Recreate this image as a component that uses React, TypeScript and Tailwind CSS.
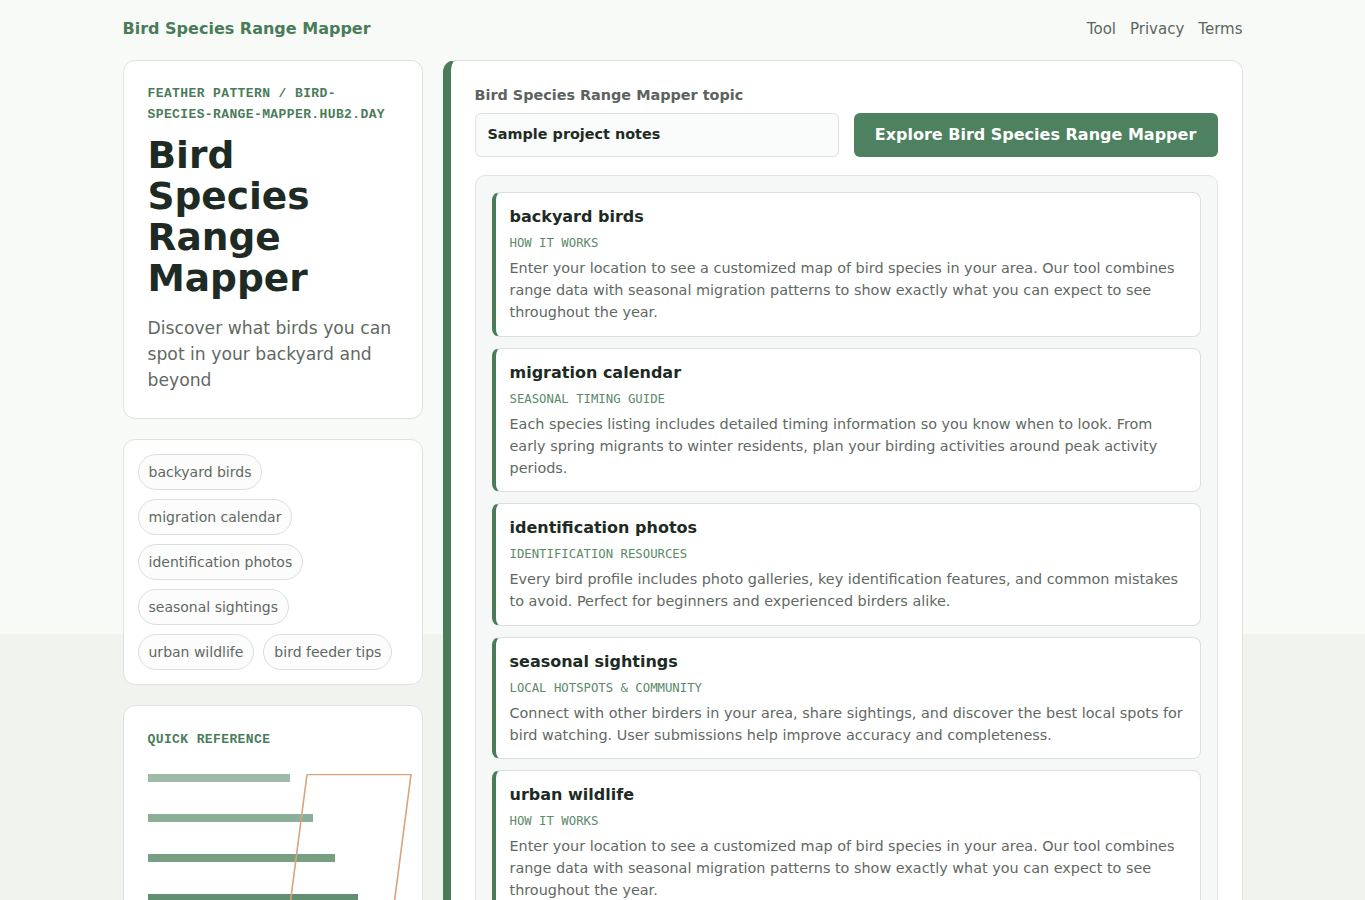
import React from "react"

const topics = [
  "backyard birds",
  "migration calendar",
  "identification photos",
  "seasonal sightings",
  "urban wildlife",
  "bird feeder tips",
]

const entries = [
  {
    title: "backyard birds",
    tag: "How it works",
    body: "Enter your location to see a customized map of bird species in your area. Our tool combines range data with seasonal migration patterns to show exactly what you can expect to see throughout the year.",
  },
  {
    title: "migration calendar",
    tag: "Seasonal timing guide",
    body: "Each species listing includes detailed timing information so you know when to look. From early spring migrants to winter residents, plan your birding activities around peak activity periods.",
  },
  {
    title: "identification photos",
    tag: "Identification resources",
    body: "Every bird profile includes photo galleries, key identification features, and common mistakes to avoid. Perfect for beginners and experienced birders alike.",
  },
  {
    title: "seasonal sightings",
    tag: "Local hotspots & community",
    body: "Connect with other birders in your area, share sightings, and discover the best local spots for bird watching. User submissions help improve accuracy and completeness.",
  },
  {
    title: "urban wildlife",
    tag: "How it works",
    body: "Enter your location to see a customized map of bird species in your area. Our tool combines range data with seasonal migration patterns to show exactly what you can expect to see throughout the year.",
  },
]

const sans = "font-['DejaVu_Sans','Verdana',sans-serif]"
const mono = "font-['Liberation_Mono','Courier_New',monospace]"
const tagMono = "font-['DejaVu_Sans_Mono','Liberation_Mono',monospace]"

function QuickReferenceArt() {
  const bars = [
    { w: 142, o: 0.55 },
    { w: 165, o: 0.65 },
    { w: 187, o: 0.78 },
    { w: 210, o: 0.9 },
    { w: 232, o: 1 },
  ]
  return (
    <svg width="264" height="200" viewBox="0 0 264 200" className="block">
      {bars.map((b, i) => (
        <rect key={i} x="0" y={i * 40} width={b.w} height="8" fill="#4f8462" opacity={b.o} />
      ))}
      <path d="M159 0.5 H263 L237 200 M159 0.5 L133 200" fill="none" stroke="#d9a37c" strokeWidth="1.6" />
    </svg>
  )
}

export default function App() {
  return (
    <div className={`min-h-screen bg-[linear-gradient(to_bottom,#f8faf8_634px,#f1f3ef_634px)] ${sans}`}>
      <div className="mx-auto w-[1120px]">
        <header className="flex items-center justify-between pt-[18px] pb-[20px] leading-[22px]">
          <a className="text-[16px] font-bold text-[#4a7c59]">Bird Species Range Mapper</a>
          <nav className="flex gap-[14px] text-[15px] text-[#5c6660]">
            <a>Tool</a>
            <a>Privacy</a>
            <a>Terms</a>
          </nav>
        </header>

        <div className="flex items-start gap-5">
          <aside className="flex w-[300px] shrink-0 flex-col gap-5">
            <section className="rounded-[12px] border border-[#dfe2df] bg-white px-6 pt-[22px] pb-[25px]">
              <p className={`${mono} text-[13px] font-bold uppercase leading-[21px] tracking-[0.03em] text-[#4a7c59]`}>
                Feather pattern / bird-species-range-mapper.hub2.day
              </p>
              <h1 className="mt-[10px] text-[37.5px] font-bold leading-[41px] text-[#1d2b24]">
                Bird Species Range Mapper
              </h1>
              <p className="mt-4 text-[17.2px] leading-[26px] text-[#5f6963]">
                Discover what birds you can spot in your backyard and beyond
              </p>
            </section>

            <section className="flex flex-wrap gap-[9px] rounded-[12px] border border-[#dfe2df] bg-white px-[14px] py-[14px]">
              {topics.map((t) => (
                <span
                  key={t}
                  className="flex h-[36px] items-center rounded-full border border-[#dcdfdc] bg-[#fbfcfb] px-[10px] text-[14px] text-[#5f6963]"
                >
                  {t}
                </span>
              ))}
            </section>

            <section className="h-[260px] overflow-hidden rounded-[12px] border border-[#dfe2df] bg-white px-6 pt-[23px]">
              <p className={`${mono} text-[13px] font-bold uppercase leading-[21px] tracking-[0.03em] text-[#4a7c59]`}>
                Quick reference
              </p>
              <div className="mt-[24px]">
                <QuickReferenceArt />
              </div>
            </section>
          </aside>

          <main className="min-w-0 flex-1 rounded-[12px] border border-l-[8px] border-[#dfe2df] border-l-[#4a7c59] bg-white p-6">
            <label className="block text-[14.4px] font-bold leading-[21px] text-[#5b635e]">
              Bird Species Range Mapper topic
            </label>
            <div className="mt-[7px] grid grid-cols-2 gap-[15px]">
              <div className="flex h-[44px] items-center rounded-[6px] border border-[#dfe2df] bg-[#f9fbfa] px-3 text-[14.4px] font-bold text-[#1d2b24]">
                Sample project notes
              </div>
              <button className="h-[44px] rounded-[6px] bg-[#4e8160] text-[16px] font-bold text-white">
                Explore Bird Species Range Mapper
              </button>
            </div>

            <div className="mt-[18px] flex flex-col gap-[11px] rounded-[10px] border border-[#e1e4e3] bg-[#f6f8f8] p-4">
              {entries.map((e, i) => (
                <article
                  key={i}
                  className="rounded-[8px] border border-l-[4px] border-[#dcdfdc] border-l-[#4a7c59] bg-white pl-[14px] pr-4 pt-[13px] pb-[12.6px]"
                >
                  <h3 className="text-[16px] font-bold leading-[22px] text-[#1d2b24]">{e.title}</h3>
                  <p className={`${tagMono} mt-[6px] text-[12.3px] uppercase leading-[18px] text-[#5a8a68]`}>{e.tag}</p>
                  <p className="mt-[5px] text-[14.4px] leading-[22px] text-[#5f6963]">{e.body}</p>
                </article>
              ))}
            </div>
          </main>
        </div>
      </div>
    </div>
  )
}
